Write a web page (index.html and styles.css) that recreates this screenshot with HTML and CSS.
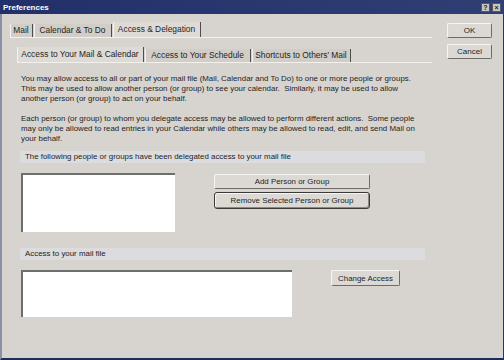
FILE: index.html
```html
<!DOCTYPE html>
<html lang="en">
<head>
    <meta charset="UTF-8">
    <title>Preferences</title>
    <link rel="stylesheet" href="styles.css">
</head>
<body>
    <div class="window">
        <div class="titlebar">
            <span class="title">Preferences</span>
            <span class="tbtn">?</span>
            <span class="tbtn close">&#215;</span>
        </div>
        <div class="dialog">
            <div class="main">
                <div class="tabs">
                    <div class="tab t-mail">Mail</div>
                    <div class="tab t-cal">Calendar &amp; To Do</div>
                    <div class="tab t-acc active">Access &amp; Delegation</div>
                </div>
                <div class="tabs subtabs">
                    <div class="tab s-mail active">Access to Your Mail &amp; Calendar</div>
                    <div class="tab s-sched">Access to Your Schedule</div>
                    <div class="tab s-short">Shortcuts to Others' Mail</div>
                </div>
                <div class="pane">
                    <p>You may allow access to all or part of your mail file (Mail, Calendar and To Do) to one or more people or groups.<br>
                    This may be used to allow another person (or group) to see your calendar.&nbsp; Similarly, it may be used to allow<br>
                    another person (or group) to act on your behalf.</p>
                    <p>Each person (or group) to whom you delegate access may be allowed to perform different actions.&nbsp; Some people<br>
                    may only be allowed to read entries in your Calendar while others may be allowed to read, edit, and send Mail on<br>
                    your behalf.</p>
                    <div class="band">The following people or groups have been delegated access to your mail file</div>
                    <div class="row">
                        <div class="listbox list-people"></div>
                        <div class="actions">
                            <button class="btn wide">Add Person or Group</button>
                            <button class="btn wide default">Remove Selected Person or Group</button>
                        </div>
                    </div>
                    <div class="band band-access">Access to your mail file</div>
                    <div class="row">
                        <div class="listbox list-access"></div>
                        <button class="btn change">Change Access</button>
                    </div>
                </div>
            </div>
            <div class="side">
                <button class="btn side-btn">OK</button>
                <button class="btn side-btn">Cancel</button>
            </div>
        </div>
    </div>
</body>
</html>
```

FILE: styles.css
```css
body {
    margin: 0;
    font-family: "Liberation Sans", Arial, sans-serif;
    font-size: 7.9px;
    color: #1e1e1e;
}
.window {
    width: 504px;
    height: 360px;
    box-sizing: border-box;
    background: #d7d4cf;
    border-left: 2px solid #8a90a6;
    border-right: 1px solid #2a3565;
    border-bottom: 2px solid #1f2b58;
    display: flex;
    flex-direction: column;
}
.titlebar {
    height: 14px;
    margin-left: -2px;
    margin-right: -1px;
    background: linear-gradient(to right, #22306a, #2f3f74);
    display: flex;
    align-items: center;
    padding: 0 3px 0 3px;
}
.title {
    color: #fff;
    font-weight: bold;
    font-size: 8px;
    flex: 1;
}
.tbtn {
    width: 9px;
    height: 9px;
    margin-left: 2px;
    background: #c9c6c2;
    border: 1px solid #56586a;
    box-sizing: border-box;
    color: #222;
    font-size: 7px;
    font-weight: bold;
    line-height: 7px;
    text-align: center;
}
.dialog {
    display: flex;
    flex: 1;
}
.main {
    margin-left: 8px;
    width: 422px;
    padding-top: 9px;
}
.tabs {
    display: flex;
    align-items: flex-end;
    height: 14px;
    border-bottom: 1px solid #f2f0ec;
}
.tab {
    height: 13px;
    line-height: 13px;
    font-size: 8.4px;
    text-align: center;
    background: #d2cec7;
    border-right: 1px solid #4d4d4d;
    box-shadow: inset 1px 0 #f4f2ee;
    margin-right: 1px;
    box-sizing: border-box;
}
.tab.active {
    height: 15px;
    line-height: 15px;
    background: #dedbd6;
}
.t-mail { width: 23px; }
.t-cal { width: 78px; }
.t-acc { width: 88px; }
.subtabs {
    margin: 10px 0 0 7px;
}
.s-mail { width: 127px; }
.s-sched { width: 106px; }
.s-short { width: 99px; }
.pane {
    padding-left: 10px;
}
.pane p {
    margin: 11px 0 0 1px;
    line-height: 10px;
}
.pane p + p {
    margin-top: 10px;
}
.band {
    margin-top: 7px;
    width: 400px;
    height: 12px;
    line-height: 12px;
    padding-left: 5px;
    background: #dcdbdd;
}
.row {
    display: flex;
    align-items: flex-start;
    margin-top: 10px;
    margin-left: 1px;
}
.listbox {
    background: #fff;
    border-top: 2px solid #6e6e6e;
    border-left: 2px solid #6e6e6e;
    box-sizing: border-box;
}
.list-people {
    width: 154px;
    height: 59px;
}
.list-access {
    width: 271px;
    height: 47px;
}
.actions {
    margin-left: 39px;
    display: flex;
    flex-direction: column;
    gap: 3px;
    margin-top: 1px;
}
.btn {
    font-family: "Liberation Sans", Arial, sans-serif;
    font-size: 7.9px;
    color: #1e1e1e;
    background: #dcd9d4;
    border: 1px solid;
    border-color: #f6f5f2 #6e6c68 #6e6c68 #f6f5f2;
    border-radius: 2px;
    padding: 0;
    box-sizing: border-box;
}
.wide {
    width: 156px;
    height: 15px;
}
.btn.default {
    height: 17px;
    border: 1px solid #3a3a3a;
    border-radius: 3px;
    box-shadow: inset -1px -1px #8a8884, inset 1px 1px #f6f5f2;
}
.band-access {
    margin-top: 16px;
}
.change {
    margin-left: 39px;
    width: 69px;
    height: 16px;
}
.side {
    margin-left: 15px;
    padding-top: 9px;
    display: flex;
    flex-direction: column;
    gap: 6px;
}
.side-btn {
    width: 45px;
    height: 15px;
    font-size: 8px;
}
```
